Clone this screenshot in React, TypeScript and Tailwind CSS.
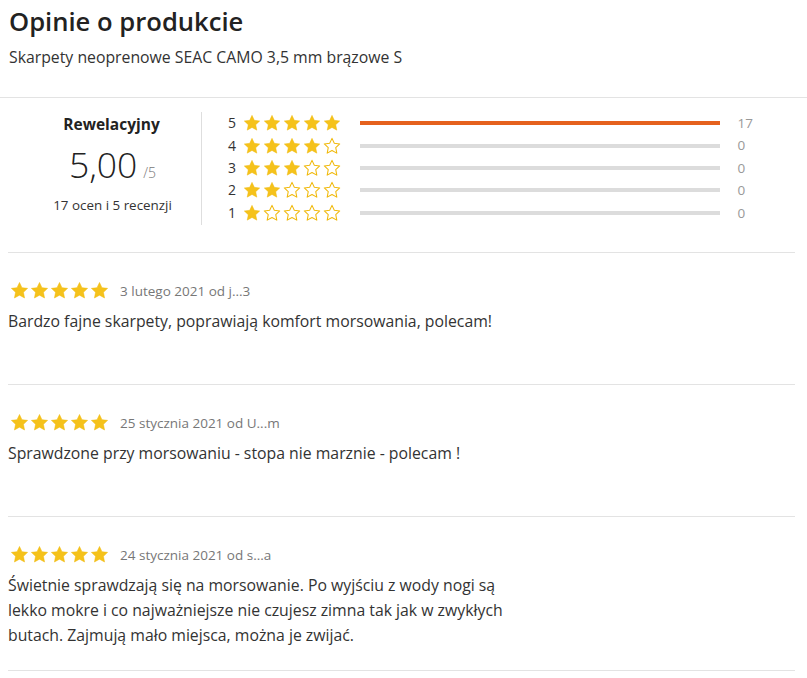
import React from "react";

const Star = ({ filled, size = 18 }: { filled: boolean; size?: number }) => (
  <svg width={size} height={size} viewBox="0 0 24 24" className="block shrink-0">
    <polygon
      points="12,1.8 15.1,8.4 22.3,9.3 17,14.3 18.4,21.5 12,17.9 5.6,21.5 7,14.3 1.7,9.3 8.9,8.4"
      fill={filled ? "#f5c21b" : "#ffffff"}
      stroke="#f0b90b"
      strokeWidth={filled ? 0.6 : 1.4}
      strokeLinejoin="round"
    />
  </svg>
);

const Stars = ({ n, size = 18, gap = "gap-[1.7px]" }: { n: number; size?: number; gap?: string }) => (
  <div className={`flex items-center ${gap}`}>
    {[0, 1, 2, 3, 4].map((i) => (
      <Star key={i} filled={i < n} size={size} />
    ))}
  </div>
);

const rows = [
  { n: 5, count: 17 },
  { n: 4, count: 0 },
  { n: 3, count: 0 },
  { n: 2, count: 0 },
  { n: 1, count: 0 },
];

const reviews = [
  {
    date: "3 lutego 2021 od j...3",
    text: "Bardzo fajne skarpety, poprawiają komfort morsowania, polecam!",
  },
  {
    date: "25 stycznia 2021 od U...m",
    text: "Sprawdzone przy morsowaniu - stopa nie marznie - polecam !",
  },
  {
    date: "24 stycznia 2021 od s...a",
    text: "Świetnie sprawdzają się na morsowanie. Po wyjściu z wody nogi są lekko mokre i co najważniejsze nie czujesz zimna tak jak w zwykłych butach. Zajmują mało miejsca, można je zwijać.",
  },
];

export default function App() {
  return (
    <div
      className="w-[807px] h-[678px] overflow-hidden bg-white text-[#333]"
      style={{ fontFamily: '"Open Sans", "Noto Sans", sans-serif' }}
    >
      <div className="pl-[9px] pt-[5px] pb-[30px] border-b border-[#e3e3e3]">
        <h1 className="text-[25.6px] leading-[33px] font-semibold text-[#222]">Opinie o produkcie</h1>
        <p className="mt-[9px] text-[15.8px] leading-[20px] text-[#333]">
          Skarpety neoprenowe SEAC CAMO 3,5 mm brązowe S
        </p>
      </div>

      <div className="ml-[8px] w-[787px]">
        <div className="flex items-start pt-[14px] pb-[27px] border-b border-[#e3e3e3]">
          <div className="ml-[12px] w-[182px] h-[113px] border-r border-[#dedede] flex flex-col items-center">
            <div className="mt-[2px] ml-[2px] text-[15.5px] leading-[20px] font-bold text-[#222]">Rewelacyjny</div>
            <div className="mt-[10px] ml-[4px] flex items-baseline">
              <span className="text-[35.5px] leading-[40px] font-light text-[#222]">5,00</span>
              <span className="ml-[6px] text-[14px] text-[#777] font-light">/5</span>
            </div>
            <div className="mt-[12px] ml-[4px] text-[13.4px] leading-[18px] text-[#333]">17 ocen i 5 recenzji</div>
          </div>
          <div className="ml-[26px] flex flex-col">
            {rows.map((r) => (
              <div key={r.n} className="flex items-center h-[22.4px]">
                <span className="w-[15px] text-[14px] leading-[20px] text-[#333]">{r.n}</span>
                <Stars n={r.n} size={18} gap="gap-[1.9px]" />
                <div className="ml-[19px] w-[360px] h-[4px] bg-[#dcdcdc]">
                  <div
                    className="h-full bg-[#e5611d]"
                    style={{ width: `${(r.count / 17) * 100}%` }}
                  />
                </div>
                <span className="ml-[18px] text-[13.5px] text-[#999]">{r.count}</span>
              </div>
            ))}
          </div>
        </div>

        {reviews.map((rv, i) => (
          <div key={i} className="min-h-[132px] pt-[28px] pb-[22px] border-b border-[#e3e3e3]">
            <div className="flex items-center">
              <div className="ml-[2px]">
                <Stars n={5} size={19} gap="gap-[1px]" />
              </div>
              <span className="ml-[11px] text-[13.5px] leading-[18px] text-[#777]">{rv.date}</span>
            </div>
            <p className="mt-[9px] max-w-[518px] text-[15.8px] leading-[25px] text-[#333]">{rv.text}</p>
          </div>
        ))}
      </div>
    </div>
  );
}
